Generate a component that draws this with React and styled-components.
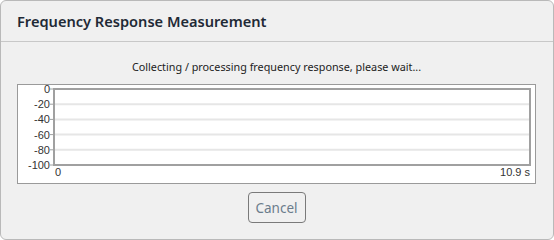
import React from "react";
import styled, { createGlobalStyle } from "styled-components";

const Global = createGlobalStyle`
  html, body { margin: 0; padding: 0; background: #ffffff; }
  #root { width: 554px; height: 240px; }
`;

const Dialog = styled.div`
  box-sizing: border-box;
  width: 554px;
  height: 240px;
  background: #f0f0f0;
  border: 1px solid #b9b9b9;
  border-radius: 6px;
  display: flex;
  flex-direction: column;
  overflow: hidden;
`;

const Header = styled.div`
  height: 40px;
  border-bottom: 1px solid #c8c8c8;
  display: flex;
  align-items: center;
  padding-left: 16px;
`;

const Title = styled.h1`
  margin: 0;
  font-family: "Noto Sans", "Open Sans", sans-serif;
  font-weight: 600;
  font-size: 14.6px;
  color: #1f2a36;
`;

const Body = styled.div`
  display: flex;
  flex-direction: column;
  align-items: center;
  padding: 17px 17px 0 16px;
`;

const Message = styled.div`
  font-family: "Noto Sans", "Open Sans", sans-serif;
  font-size: 10.8px;
  line-height: 16px;
  color: #222;
`;

const ChartBox = styled.div`
  box-sizing: border-box;
  margin-top: 9px;
  width: 519px;
  height: 100px;
  border: 1px solid #9a9a9a;
  background: #ffffff;
`;

const ChartSvg = styled.svg`
  display: block;
  overflow: visible;
`;

const Button = styled.button`
  box-sizing: border-box;
  margin-top: 8px;
  width: 58px;
  height: 31px;
  background: #f0f0f0;
  border: 1px solid #7a7a7a;
  border-radius: 4px;
  font-family: "Noto Sans", "Open Sans", sans-serif;
  font-size: 13.5px;
  color: #6b7c8c;
  padding: 0;
`;

const yLabels = ["0", "-20", "-40", "-60", "-80", "-100"];

function Chart() {
  const left = 36;
  const right = 512;
  const top = 4;
  const bottom = 80;
  const step = (bottom - top) / 5;
  return (
    <ChartSvg width="517" height="98" viewBox="0 0 517 98">
      {yLabels.map((l, i) => {
        const y = top + step * i;
        return (
          <g key={l}>
            {i > 0 && i < 5 && (
              <line x1={left} x2={right} y1={y} y2={y} stroke="#e6e6e6" strokeWidth="2" />
            )}
            <line x1={left - 4} x2={left} y1={y} y2={y} stroke="#a0a0a0" strokeWidth="1" />
            <text
              x={left - 4}
              y={y + 4}
              textAnchor="end"
              fontFamily="Liberation Sans, Arial, sans-serif"
              fontSize="11"
              fill="#333"
            >
              {l}
            </text>
          </g>
        );
      })}
      <rect
        x={left}
        y={top}
        width={right - left}
        height={bottom - top}
        fill="none"
        stroke="#a0a0a0"
        strokeWidth="2"
      />
      <text x={left + 1} y={bottom + 11} fontFamily="Liberation Sans, Arial, sans-serif" fontSize="11" fill="#333">
        0
      </text>
      <text
        x={right}
        y={bottom + 11}
        textAnchor="end"
        fontFamily="Liberation Sans, Arial, sans-serif"
        fontSize="11"
        fill="#333"
      >
        10.9 s
      </text>
    </ChartSvg>
  );
}

export default function App() {
  return (
    <>
      <Global />
      <Dialog>
        <Header>
          <Title>Frequency Response Measurement</Title>
        </Header>
        <Body>
          <Message>Collecting / processing frequency response, please wait...</Message>
          <ChartBox>
            <Chart />
          </ChartBox>
          <Button>Cancel</Button>
        </Body>
      </Dialog>
    </>
  );
}
